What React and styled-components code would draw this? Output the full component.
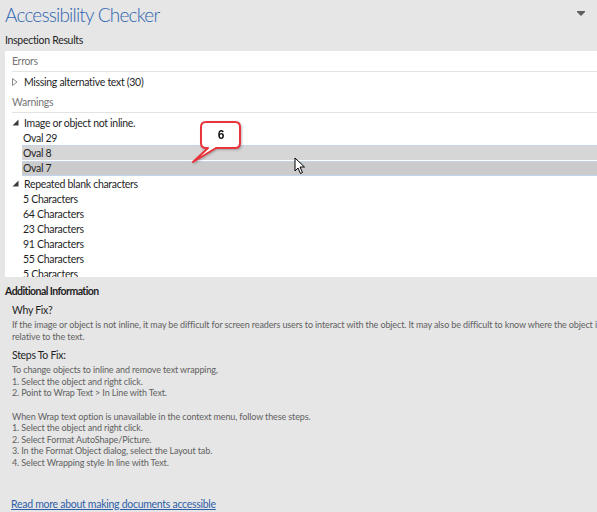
import React from "react";
import styled, { createGlobalStyle } from "styled-components";

const GlobalStyle = createGlobalStyle`
  html, body { margin: 0; padding: 0; background: #e6e6e6; overflow: hidden; }
  body { font-family: Lato, "Open Sans", sans-serif; }
`;

const Page = styled.div`
  width: 640px;
  height: 512px;
  overflow: hidden;
  display: flex;
  flex-direction: column;
  background: #e6e6e6;
`;

const Header = styled.div`
  width: 597px;
  display: flex;
  align-items: flex-start;
  justify-content: space-between;
  padding: 0 12px 0 5px;
  box-sizing: border-box;
  height: 31px;
`;

const Title = styled.h1`
  margin: 0;
  font-family: Lato, sans-serif;
  font-weight: 300;
  font-size: 19px;
  letter-spacing: -0.8px;
  line-height: 30px;
  color: #2f65b0;
`;

const Caret = styled.span`
  margin-top: 12px;
  width: 0;
  height: 0;
  border-left: 4px solid transparent;
  border-right: 4px solid transparent;
  border-top: 4px solid #5f5f5f;
  box-shadow: 0 -1px 0 #5f5f5f;
`;

const SectionLabel = styled.div`
  padding-left: 5px;
  font-size: 10.5px;
  letter-spacing: -0.3px;
  line-height: 19px;
  height: 20px;
  color: #1f1f1f;
`;

const ResultsPanel = styled.div`
  position: relative;
  margin-left: 5px;
  height: 226px;
  background: #ffffff;
  overflow: hidden;
  padding-left: 7px;
`;

const GroupHeader = styled.div`
  height: 20px;
  line-height: 20px;
  font-size: 10.5px;
  letter-spacing: -0.3px;
  color: #767676;
  border-bottom: 1px solid #e3e3e3;
`;

const TreeList = styled.div`
  padding-top: ${(p) => p.$pad || 0}px;
`;

const Row = styled.div`
  display: flex;
  align-items: center;
  height: ${(p) => p.$h || 15}px;
  margin-top: ${(p) => p.$mt || 0}px;
  font-size: 10.5px;
  letter-spacing: -0.3px;
  color: #1f1f1f;
`;

const Toggle = styled.span`
  width: 11px;
  display: flex;
  align-items: center;
  justify-content: flex-start;
`;

const ItemText = styled.span`
  flex: 1;
  display: flex;
  align-items: center;
  height: 100%;
  box-sizing: border-box;
  padding-left: 1px;
  margin-left: ${(p) => (p.$leaf ? 10 : 0)}px;
  background: ${(p) => p.$bg || "transparent"};
  border-top: 1px solid ${(p) => (p.$sel ? "#c3d5ee" : "transparent")};
  border-bottom: 1px solid ${(p) => (p.$selLast ? "#c3d5ee" : "transparent")};
  margin-bottom: ${(p) => (p.$selLast ? -1 : 0)}px;
`;

const Callout = styled.div`
  position: absolute;
  left: 184px;
  top: 67px;
  width: 56px;
  height: 48px;
  filter: drop-shadow(1px 1px 1px rgba(0, 0, 0, 0.25));
`;

const CalloutLabel = styled.span`
  position: absolute;
  left: 12px;
  top: 4px;
  width: 40px;
  height: 26px;
  display: flex;
  align-items: center;
  justify-content: center;
  font-family: "Liberation Sans", Arial, sans-serif;
  font-weight: bold;
  font-size: 12px;
  color: #111;
`;

const Cursor = styled.svg`
  position: absolute;
  left: 289px;
  top: 106px;
`;

const InfoSection = styled.div`
  display: flex;
  flex-direction: column;
  padding-top: 6px;
`;

const InfoHeading = styled.div`
  padding-left: 5px;
  font-size: 10.5px;
  letter-spacing: -0.55px;
  font-weight: 700;
  color: #1f1f1f;
  line-height: 17px;
`;

const SubHeading = styled.div`
  padding-left: 12px;
  font-size: 10.5px;
  letter-spacing: -0.3px;
  color: #1f1f1f;
  line-height: 16px;
  margin-top: ${(p) => p.$mt || 0}px;
`;

const Paragraph = styled.div`
  padding-left: 12px;
  font-size: 9px;
  letter-spacing: -0.12px;
  line-height: 11.6px;
  color: #616161;
  white-space: nowrap;
  margin-top: 1px;
`;

const Line = styled.div`
  height: 11.6px;
`;

const LinkText = styled.a`
  margin: 27px 0 0 11px;
  font-size: 10.5px;
  letter-spacing: -0.28px;
  color: #2e5ea8;
  text-decoration: underline;
  line-height: 16px;
  cursor: pointer;
`;

const Collapsed = () => (
  <svg width="6" height="8" viewBox="0 0 6 8">
    <path d="M0.5 0.5 L5 4 L0.5 7.5 Z" fill="none" stroke="#8a8a8a" strokeWidth="1" />
  </svg>
);

const Expanded = () => (
  <svg width="7" height="7" viewBox="0 0 7 7">
    <path d="M6.5 0.5 L6.5 6.5 L0.5 6.5 Z" fill="#3a3a3a" />
  </svg>
);

const chars = ["5 Characters", "64 Characters", "23 Characters", "91 Characters", "55 Characters", "5 Characters"];

export default function App() {
  return (
    <Page>
      <GlobalStyle />
      <Header>
        <Title>Accessibility Checker</Title>
        <Caret />
      </Header>
      <SectionLabel>Inspection Results</SectionLabel>
      <ResultsPanel>
        <GroupHeader>Errors</GroupHeader>
        <Row $h={20}>
          <Toggle><Collapsed /></Toggle>
          <ItemText>Missing alternative text (30)</ItemText>
        </Row>
        <GroupHeader>Warnings</GroupHeader>
        <TreeList $pad={2}>
          <Row>
            <Toggle><Expanded /></Toggle>
            <ItemText>Image or object not inline.</ItemText>
          </Row>
          <Row>
            <ItemText $leaf>Oval 29</ItemText>
          </Row>
          <Row>
            <ItemText $leaf $sel $bg="#d6d6d6">Oval 8</ItemText>
          </Row>
          <Row>
            <ItemText $leaf $sel $selLast $bg="#cbcbcb">Oval 7</ItemText>
          </Row>
          <Row $mt={1}>
            <Toggle><Expanded /></Toggle>
            <ItemText>Repeated blank characters</ItemText>
          </Row>
          {chars.map((c, i) => (
            <Row key={i}>
              <ItemText $leaf>{c}</ItemText>
            </Row>
          ))}
        </TreeList>
        <Callout>
          <svg width="56" height="48" viewBox="0 0 56 48">
            <path
              d="M17 4 H46 Q51 4 51 9 V25 Q51 30 46 30 H27 L4 44 L19 30 H17 Q12 30 12 25 V9 Q12 4 17 4 Z"
              fill="#ffffff"
              stroke="#e8353b"
              strokeWidth="2"
              strokeLinejoin="round"
            />
          </svg>
          <CalloutLabel>6</CalloutLabel>
        </Callout>
        <Cursor width="12" height="18" viewBox="0 0 12 18">
          <path d="M1 1 L1 14 L4 11 L6.5 16.5 L8.5 15.5 L6 10 L10.5 10 Z" fill="#ffffff" stroke="#000000" strokeWidth="1" strokeLinejoin="round" />
        </Cursor>
      </ResultsPanel>
      <InfoSection>
        <InfoHeading>Additional Information</InfoHeading>
        <SubHeading $mt={2}>Why Fix?</SubHeading>
        <Paragraph>
          If the image or object is not inline, it may be difficult for screen readers users to interact with the object. It may also be difficult to know where the object is
          <br />
          relative to the text.
        </Paragraph>
        <SubHeading $mt={5}>Steps To Fix:</SubHeading>
        <Paragraph>
          To change objects to inline and remove text wrapping,
          <br />
          1. Select the object and right click.
          <br />
          2. Point to Wrap Text &gt; In Line with Text.
          <Line />
          When Wrap text option is unavailable in the context menu, follow these steps.
          <br />
          1. Select the object and right click.
          <br />
          2. Select Format AutoShape/Picture.
          <br />
          3. In the Format Object dialog, select the Layout tab.
          <br />
          4. Select Wrapping style In line with Text.
        </Paragraph>
        <LinkText>Read more about making documents accessible</LinkText>
      </InfoSection>
    </Page>
  );
}
